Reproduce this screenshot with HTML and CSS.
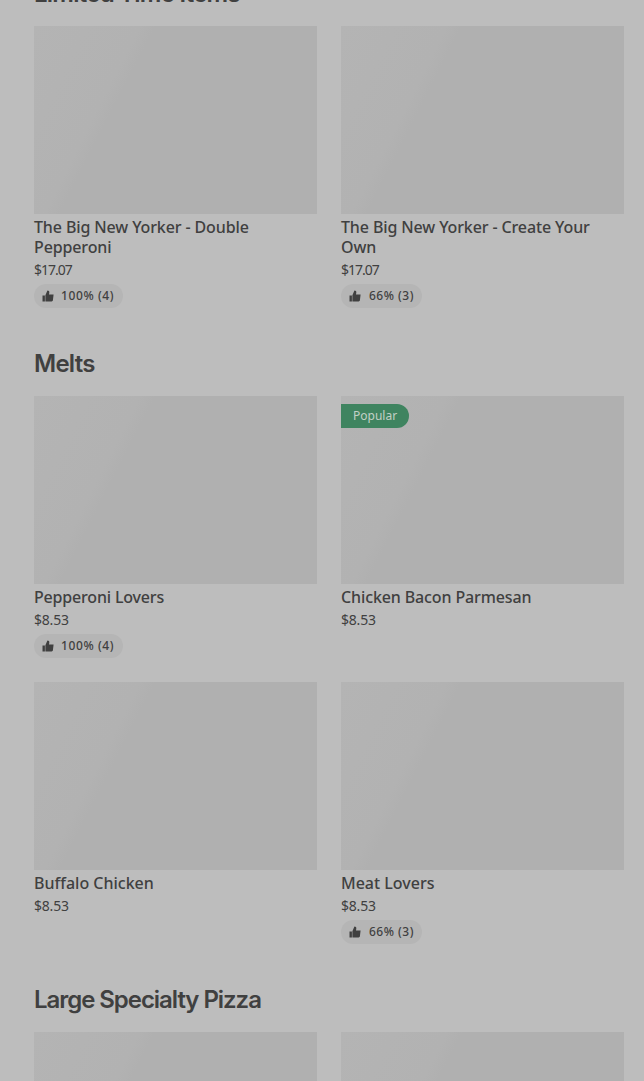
FILE: index.html
```html
<!DOCTYPE html>
<html lang="en">
<head>
<meta charset="utf-8">
<title>Menu</title>
<link rel="stylesheet" href="styles.css">
</head>
<body>
<svg class="defs" aria-hidden="true"><symbol id="thumb" viewBox="0 0 12 12"><path d="M0.5 5.4H2.9V11.4H0.5ZM3.4 5.3 5.4 0.5C6.9 0.5 7.5 1.3 7.3 2.5L7 4.4H11.6L10.9 10.2C10.8 10.9 10.3 11.4 9.6 11.4H3.4Z"/></symbol></svg>
<main class="menu">
  <section class="section">
    <h2 class="heading">Limited Time Items</h2>
    <div class="grid">
      <article class="item">
        <div class="photo"></div>
        <h3 class="name">The Big New Yorker - Double<br>Pepperoni</h3>
        <p class="price narrow">$17.07</p>
        <div class="rating"><svg class="thumb"><use href="#thumb"/></svg><span class="score">100% (4)</span></div>
      </article>
      <article class="item">
        <div class="photo"></div>
        <h3 class="name">The Big New Yorker - Create Your<br>Own</h3>
        <p class="price narrow">$17.07</p>
        <div class="rating short"><svg class="thumb"><use href="#thumb"/></svg><span class="score">66% (3)</span></div>
      </article>
    </div>
  </section>
  <section class="section">
    <h2 class="heading">Melts</h2>
    <div class="grid">
      <article class="item">
        <div class="photo"></div>
        <h3 class="name tight">Pepperoni Lovers</h3>
        <p class="price">$8.53</p>
        <div class="rating"><svg class="thumb"><use href="#thumb"/></svg><span class="score">100% (4)</span></div>
      </article>
      <article class="item">
        <div class="photo"><span class="popular">Popular</span></div>
        <h3 class="name">Chicken Bacon Parmesan</h3>
        <p class="price">$8.53</p>
      </article>
      <article class="item">
        <div class="photo"></div>
        <h3 class="name loose">Buffalo Chicken</h3>
        <p class="price">$8.53</p>
      </article>
      <article class="item">
        <div class="photo"></div>
        <h3 class="name loose">Meat Lovers</h3>
        <p class="price">$8.53</p>
        <div class="rating short"><svg class="thumb"><use href="#thumb"/></svg><span class="score">66% (3)</span></div>
      </article>
    </div>
  </section>
  <section class="section">
    <h2 class="heading long">Large Specialty Pizza</h2>
    <div class="grid">
      <article class="item"><div class="photo"></div></article>
      <article class="item"><div class="photo"></div></article>
    </div>
  </section>
</main>
</body>
</html>
```

FILE: styles.css
```css
* { box-sizing: border-box; margin: 0; padding: 0; }
body { background: #bdbdbd; color: #404040; font-family: "Noto Sans", sans-serif; }
.defs { display: none; }
.menu { height: 1081px; overflow: hidden; padding: 0 20px 0 34px; }
.section { margin-bottom: 40px; }
.section:first-child { margin-top: -22px; }
.heading { font: 600 24px/32px Inter, sans-serif; letter-spacing: -0.75px; margin-bottom: 16px; white-space: nowrap; }
.long { letter-spacing: -1.05px; }
.grid { display: grid; grid-template-columns: 1fr 1fr; gap: 24px; }
.photo { position: relative; height: 188px; background: linear-gradient(117deg, #b4b4b4 0%, #b2b2b2 28%, #b0b0b0 32%, #b0b0b0 100%); }
.name { font-size: 16px; line-height: 20px; font-weight: 500; margin-top: 3px; letter-spacing: -0.12px; white-space: nowrap; }
.tight { letter-spacing: -0.18px; }
.loose { letter-spacing: 0; }
.price { font-size: 14px; line-height: 20px; margin-top: 3px; letter-spacing: -0.2px; }
.narrow { letter-spacing: -1px; }
.rating { display: flex; align-items: center; width: 89px; height: 24px; margin-top: 4px; padding-left: 8px; border-radius: 12px; background: #b5b5b5; }
.short { width: 81px; }
.thumb { width: 12px; height: 12px; fill: #404040; }
.score { margin-left: 7px; font-size: 12px; line-height: 20px; font-weight: 500; letter-spacing: 0.6px; white-space: nowrap; }
.short .score { margin-left: 8px; letter-spacing: 0.5px; }
.popular { position: absolute; left: 0; top: 8px; width: 68px; height: 24px; padding-left: 12px; border-radius: 0 12px 12px 0; background: #3f8460; color: #c2d0c6; font-size: 12px; line-height: 23px; }
```
